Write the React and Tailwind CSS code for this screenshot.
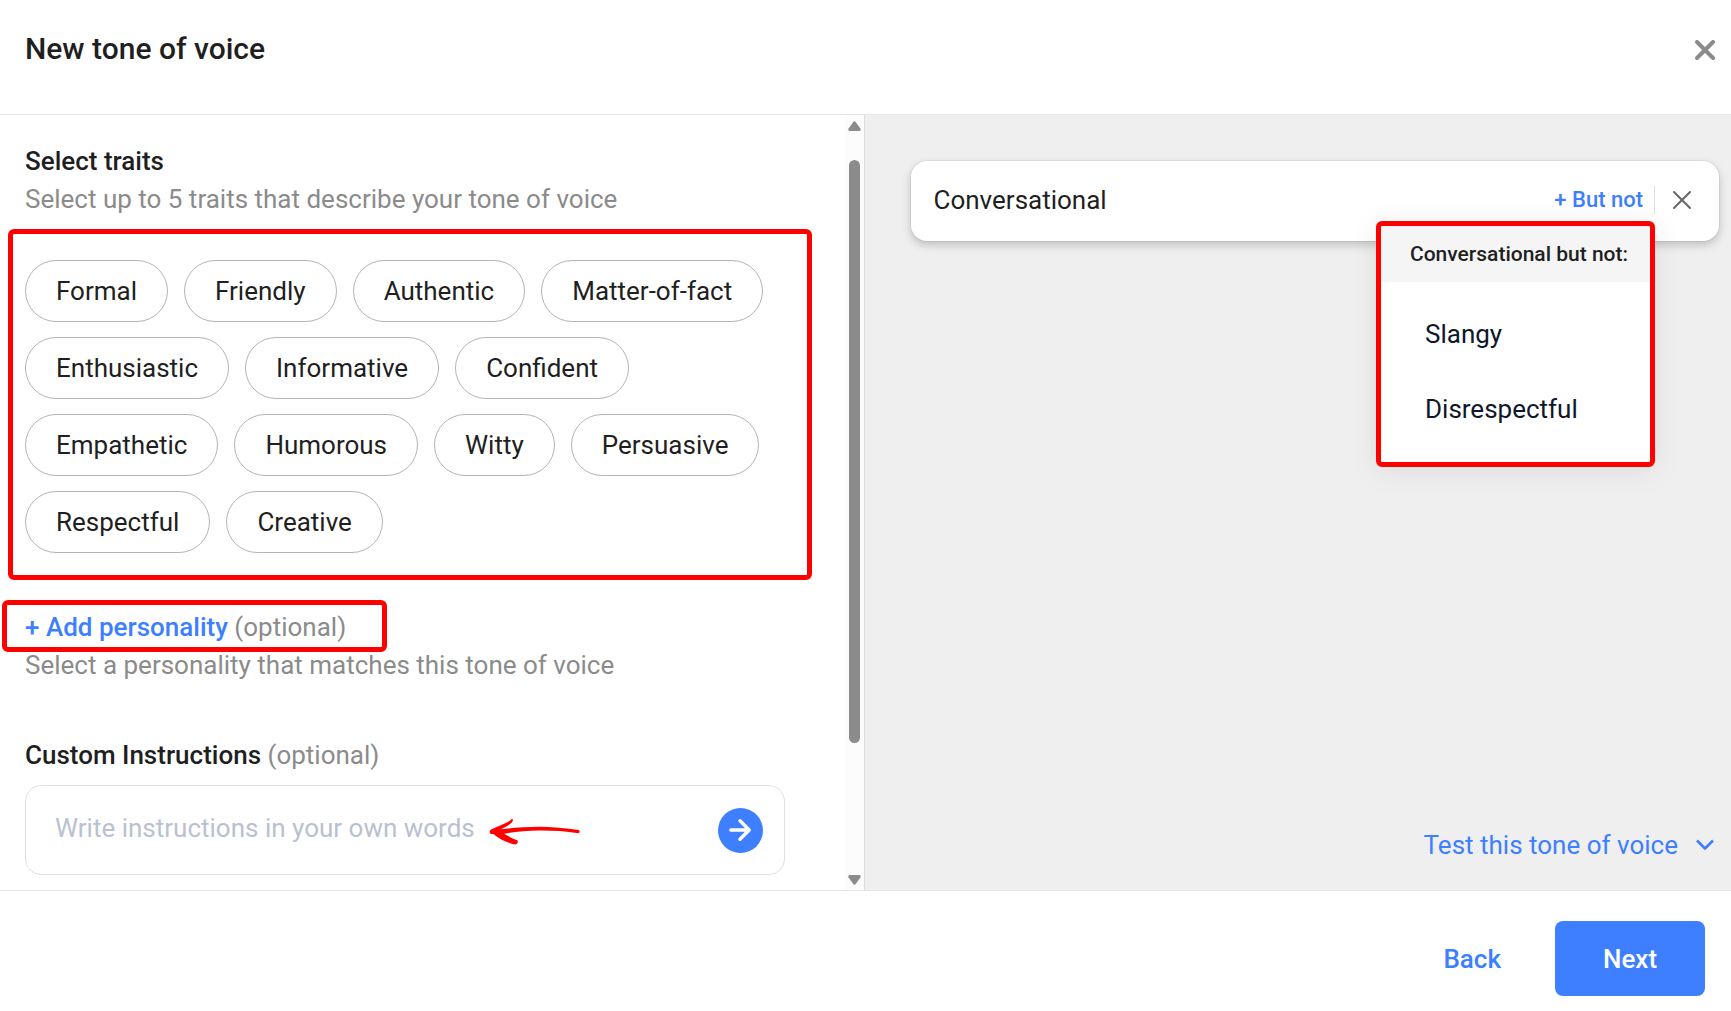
import React, { useState } from "react";
import clsx from "clsx";

const TRAITS = [
  "Formal",
  "Friendly",
  "Authentic",
  "Matter-of-fact",
  "Enthusiastic",
  "Informative",
  "Confident",
  "Empathetic",
  "Humorous",
  "Witty",
  "Persuasive",
  "Respectful",
  "Creative",
];

const EXCLUSIONS = ["Slangy", "Disrespectful"];

/**
 * Red frame that marks a region of the dialog.
 * The parent has to be positioned.
 */
const Highlight = ({ className }) => (
  <span
    aria-hidden="true"
    className={clsx(
      "absolute pointer-events-none rounded-md border-5 border-[#ff0000]",
      className
    )}
  />
);

const Optional = () => (
  <span className="font-normal text-[#8b8b8b]">(optional)</span>
);

const CrossIcon = ({ className, strokeWidth }) => (
  <svg
    viewBox="0 0 20 20"
    className={className}
    fill="none"
    stroke="currentColor"
    strokeWidth={strokeWidth}
    strokeLinecap="round"
    aria-hidden="true"
  >
    <path d="M2 2 18 18M18 2 2 18" />
  </svg>
);

/** Hand-drawn arrow that points at the instructions box */
const SketchArrow = () => (
  <svg
    viewBox="0 0 92 28"
    className="absolute left-[463px] top-8 h-7 w-[92px] pointer-events-none"
    fill="#ff0000"
    aria-hidden="true"
  >
    <path d="M22.6 1.2C23.8 .8 24.3 2 23.6 3.2C21.500 6.500 16.500 9 12 11.200C24 9.800 36 8.700 50 8.700C63 8.800 77 10 89.800 11.900C91 12.300 90.800 15 89.500 15.200C76 13 63 12.400 50 12.500C38 12.600 26 13.800 15 15.700C20 18.500 24 20.700 28.200 22.200C29.600 23 28.500 26.300 26.500 26.400C18 25 9 20.300 4.500 16C2.500 16.300 1 15.600 .7 14.500C.4 13 1.500 11.800 3.200 11.100C9 8.500 16 5.500 20.500 3C21.500 2.300 21.700 1.500 22.600 1.200Z" />
  </svg>
);

const Scrollbar = () => (
  <div
    aria-hidden="true"
    className="flex w-[19px] shrink-0 flex-col items-center bg-[#fcfcfc] pt-1.5 pb-[5px] text-[#8b8b8b]"
  >
    <svg viewBox="0 0 13 10" className="h-[10px] w-[13px]" fill="currentColor">
      <path d="M5.500 .8Q6.500 -.2 7.500 .8L12.600 7.800Q13 9.800 11.500 10H1.500Q0 9.800 .4 7.800Z" />
    </svg>
    <div className="flex w-[11px] grow flex-col pt-[29px]">
      <div className="basis-[81.5%] rounded-full bg-[#8b8b8b]" />
    </div>
    <svg viewBox="0 0 13 10" className="h-[10px] w-[13px]" fill="currentColor">
      <path d="M5.500 9.200Q6.500 10.200 7.500 9.200L12.600 2.200Q13 .2 11.500 0H1.500Q0 .2 .4 2.200Z" />
    </svg>
  </div>
);

const TraitPicker = () => {
  const [selected, setSelected] = useState([]);

  const toggle = (trait) =>
    setSelected((current) =>
      current.includes(trait)
        ? current.filter((t) => t !== trait)
        : [...current, trait].slice(0, 5)
    );

  return (
    <div className="relative mt-[42px] flex flex-wrap gap-x-4 gap-y-[15px]">
      {TRAITS.map((trait) => (
        <button
          key={trait}
          type="button"
          aria-pressed={selected.includes(trait)}
          onClick={() => toggle(trait)}
          className={clsx(
            "h-[62px] rounded-full border px-[30px]",
            selected.includes(trait)
              ? "border-[#3d7fff] text-[#3d7fff]"
              : "border-[#b5b5b5]"
          )}
        >
          {trait}
        </button>
      ))}
      <Highlight className="-top-[31px] -right-[27px] -bottom-[27px] -left-[17px]" />
    </div>
  );
};

const Instructions = () => (
  <>
    <label htmlFor="instructions" className="mt-[52px] block font-medium">
      Custom Instructions <Optional />
    </label>
    <div className="relative mt-[11px] flex h-[90px] items-center rounded-2xl border border-[#e0e0e0] pr-[21px] pl-[29px]">
      <input
        id="instructions"
        type="text"
        placeholder="Write instructions in your own words"
        className="min-w-0 grow pb-1 outline-none placeholder:text-[#b9c1d1]"
      />
      <button
        type="button"
        aria-label="Send instructions"
        className="flex size-[45px] shrink-0 items-center justify-center rounded-full bg-[#3d7fff] text-white"
      >
        <svg
          viewBox="0 0 22 22"
          className="size-[22px]"
          fill="none"
          stroke="currentColor"
          strokeWidth="3.4"
          strokeLinecap="round"
          strokeLinejoin="round"
          aria-hidden="true"
        >
          <path d="M1.800 11H20M11 1.800 20.200 11 11 20.200" />
        </svg>
      </button>
      <SketchArrow />
    </div>
  </>
);

const ButNotMenu = () => (
  <div className="absolute top-[60px] right-16 w-[279px] rounded-md bg-white p-[5px] shadow-[0_4px_30px_rgba(0,0,0,0.08)]">
    <p className="flex h-14 items-center bg-[#f5f5f5] px-[29px] text-[21px] font-medium whitespace-nowrap">
      Conversational but not:
    </p>
    <ul className="pt-3.5 pb-4 text-[#0f172a]">
      {EXCLUSIONS.map((name) => (
        <li key={name}>
          <button type="button" className="h-[75px] w-full px-11 text-left">
            {name}
          </button>
        </li>
      ))}
    </ul>
    <Highlight className="inset-0" />
  </div>
);

const SelectedTrait = () => (
  <div className="relative flex h-20 items-center rounded-2xl bg-white pr-[25px] pb-0.5 pl-[23px] shadow-[0_0_0_1px_rgba(0,0,0,0.05),0_4px_10px_rgba(0,0,0,0.2)]">
    <span className="grow">Conversational</span>
    <button
      type="button"
      className="border-r border-[#e0e0e0] pr-[11px] text-[22px] leading-7 font-medium text-[#3d7fff]"
    >
      + But not
    </button>
    <button
      type="button"
      aria-label="Remove Conversational"
      className="ml-[15px] p-0.5 text-[#666666]"
    >
      <CrossIcon className="size-5" strokeWidth="2" />
    </button>
    <ButNotMenu />
  </div>
);

const App = () => (
  <div className="flex min-h-screen flex-col bg-white font-[Roboto,sans-serif] text-[26px] leading-[38px] text-[#1f1f1f]">
    <header className="flex h-[115px] items-start justify-between border-b border-[#e6e6e6] pt-[30px] pr-4 pl-[25px]">
      <h1 className="text-[30px] font-medium">New tone of voice</h1>
      <button type="button" aria-label="Close" className="mt-2.5 text-[#8b8b8b]">
        <CrossIcon className="size-5" strokeWidth="4" />
      </button>
    </header>

    <main className="flex grow">
      <section className="flex w-[calc(50%-1px)] shrink-0 border-r border-[#dedede]">
        <div className="grow pt-[27px] pr-[60px] pb-[15px] pl-[25px]">
          <h2 className="font-medium">Select traits</h2>
          <p className="text-[#8b8b8b]">
            Select up to 5 traits that describe your tone of voice
          </p>
          <TraitPicker />

          <div className="relative mt-[55px]">
            <button type="button" className="font-medium text-[#3d7fff]">
              + Add personality
            </button>{" "}
            <Optional />
            <Highlight className="-top-2 -left-[23px] h-[52px] w-[385px]" />
          </div>
          <p className="text-[#8b8b8b]">
            Select a personality that matches this tone of voice
          </p>

          <Instructions />
        </div>
        <Scrollbar />
      </section>

      <section className="flex grow flex-col justify-between bg-[#efefef] pt-[46px] pr-3 pb-[26px] pl-[46px]">
        <SelectedTrait />
        <button
          type="button"
          className="flex items-center gap-[18px] self-end pr-[5px] text-[#3d7fff]"
        >
          Test this tone of voice
          <svg
            viewBox="0 0 18 12"
            className="h-3 w-[18px]"
            fill="none"
            stroke="currentColor"
            strokeWidth="2.600"
            strokeLinejoin="round"
            aria-hidden="true"
          >
            <path d="M1 1.500 9 9.500 17 1.500" />
          </svg>
        </button>
      </section>
    </main>

    <footer className="flex items-center justify-end gap-[54px] border-t border-[#e6e6e6] pt-[30px] pr-[26px] pb-4 font-medium">
      <button type="button" className="text-[#3d7fff]">
        Back
      </button>
      <button
        type="button"
        className="h-[75px] w-[150px] rounded-lg bg-[#3d7fff] text-white"
      >
        Next
      </button>
    </footer>
  </div>
);

export default App;
